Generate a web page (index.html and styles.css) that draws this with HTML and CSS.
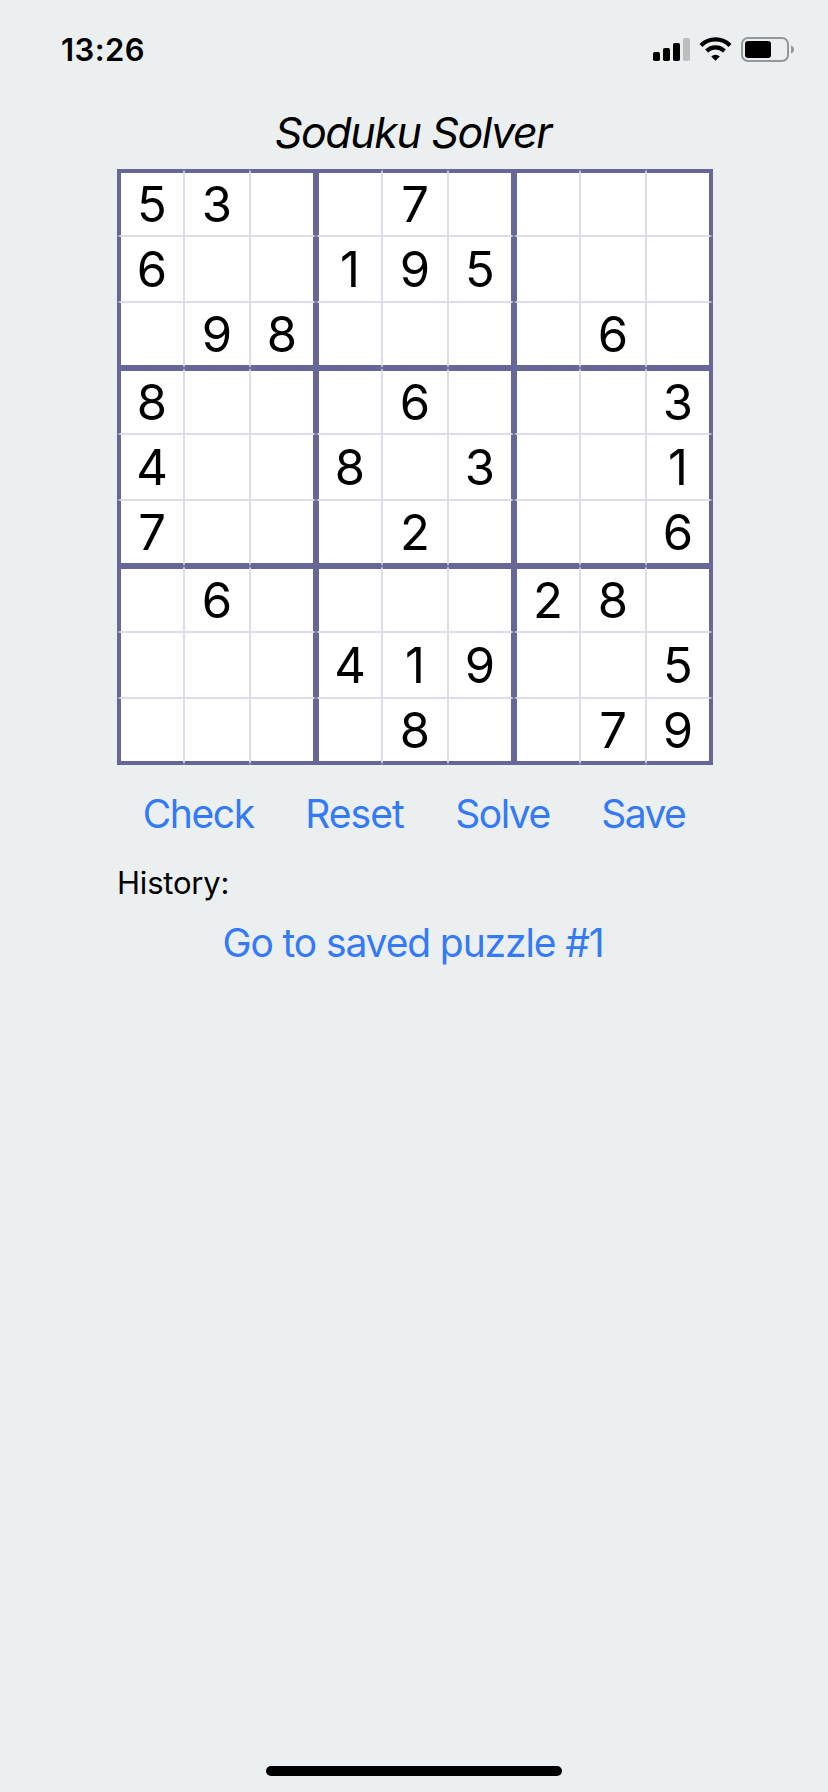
FILE: index.html
```html
<!DOCTYPE html>
<html lang="en">
<head>
<meta charset="utf-8">
<title>Soduku Solver</title>
<link rel="stylesheet" href="styles.css">
</head>
<body>
<div class="screen">
  <header class="status">
    <span class="time">13:26</span>
    <svg class="status-icons" width="144" height="32" viewBox="0 0 144 32">
      <rect x="1" y="18" width="7" height="9" rx="1.8"/>
      <rect x="11" y="14" width="7" height="13" rx="1.8"/>
      <rect x="21" y="9" width="7" height="18" rx="1.8"/>
      <rect x="31" y="4" width="7" height="23" rx="1.8" fill="#bcbfc0"/>
      <g fill="none" stroke="#000" stroke-width="4.2">
        <path d="M49 11.4A20.5 20.5 0 0 1 78 11.4"/>
        <path d="M54.6 17A12.6 12.6 0 0 1 72.4 17"/>
      </g>
      <path d="M63.500 26.800L59.200 22.400A6.400 6.400 0 0 1 67.800 22.400Z"/>
      <rect x="90" y="4" width="46" height="23" rx="6" fill="none" stroke="#949798" stroke-width="2"/>
      <rect x="93" y="7" width="26" height="17" rx="3"/>
      <path d="M139 11.500Q142 12.500 142 15.500T139 19.500Z" fill="#949798"/>
    </svg>
  </header>
  <main class="content">
    <h1 class="title">Soduku Solver</h1>
    <div class="board" id="board"></div>
    <nav class="actions">
      <a class="link check">Check</a>
      <a class="link reset">Reset</a>
      <a class="link solve">Solve</a>
      <a class="link save">Save</a>
    </nav>
    <p class="history">History:</p>
    <a class="link saved">Go to saved puzzle #1</a>
  </main>
  <div class="home-bar"></div>
</div>
<script src="board.js"></script>
</body>
</html>
```
FILE: board.js
```js
const puzzle = [
  "53..7....",
  "6..195...",
  ".98....6.",
  "8...6...3",
  "4..8.3..1",
  "7...2...6",
  ".6....28.",
  "...419..5",
  "....8..79"
];
const board = document.getElementById("board");
puzzle.forEach(line => {
  [...line].forEach(value => {
    const cell = document.createElement("div");
    cell.className = "cell";
    if (value !== ".") {
      const digit = document.createElement("span");
      digit.textContent = value;
      cell.append(digit);
    }
    board.append(cell);
  });
});
```
FILE: styles.css
```css
* { box-sizing: border-box; }
body {
  margin: 0;
  background: #ebeff0;
  color: #000;
  font-family: Inter, "Liberation Sans", sans-serif;
}
.screen {
  display: flex;
  flex-direction: column;
  align-items: center;
  width: 828px;
  height: 1792px;
  padding-bottom: 16px;
}
.status {
  display: flex;
  justify-content: space-between;
  align-items: flex-start;
  width: 100%;
  height: 107px;
  padding: 34px 32px 0 61px;
}
.time { font-size: 31px; font-weight: 600; line-height: 32px; letter-spacing: 0.4px; }
.content {
  display: flex;
  flex-direction: column;
  align-items: center;
  width: 596px;
  margin-left: 2px;
  flex: 1;
}
.title {
  margin: 0;
  padding-right: 4px;
  height: 62px;
  line-height: 50px;
  font-size: 43px;
  font-weight: 400;
  font-style: italic;
  letter-spacing: -1.4px;
  white-space: nowrap;
}
.board {
  display: grid;
  grid-template-columns: 67px repeat(7, 66px) 67px;
  grid-template-rows: 67px repeat(7, 66px) 67px;
  background: #fff;
}
.cell {
  display: flex;
  align-items: center;
  justify-content: center;
  border: 1px solid #dde;
  padding-top: 2px;
  font-size: 49px;
  line-height: 58px;
}
.cell:nth-child(9n + 1) { border-left: 4px solid #669; }
.cell:nth-child(9n) { border-right: 4px solid #669; }
.cell:nth-child(9n + 3), .cell:nth-child(9n + 6) { border-right: 3px solid #669; }
.cell:nth-child(9n + 4), .cell:nth-child(9n + 7) { border-left: 3px solid #669; }
.cell:nth-child(-n + 9) { border-top: 4px solid #669; }
.cell:nth-child(n + 73) { border-bottom: 4px solid #669; }
.cell:nth-child(n + 19):nth-child(-n + 27),
.cell:nth-child(n + 46):nth-child(-n + 54) { border-bottom: 3px solid #669; }
.cell:nth-child(n + 28):nth-child(-n + 36),
.cell:nth-child(n + 55):nth-child(-n + 63) { border-top: 3px solid #669; }
.actions {
  display: flex;
  justify-content: space-around;
  width: 100%;
  margin-top: 25px;
  padding-right: 2px;
}
.link { color: #347af6; font-size: 39px; line-height: 48px; white-space: nowrap; }
.check { letter-spacing: -1.4px; }
.reset { letter-spacing: -1px; }
.solve { letter-spacing: -1.5px; }
.save { letter-spacing: -1.6px; }
.history {
  align-self: flex-start;
  margin: 25px 0 0;
  font-size: 31px;
  line-height: 40px;
  letter-spacing: -0.2px;
}
.saved { margin-top: 16px; padding-right: 4px; letter-spacing: -1.12px; }
.home-bar { width: 296px; height: 10px; border-radius: 5px; background: #000; }
```
